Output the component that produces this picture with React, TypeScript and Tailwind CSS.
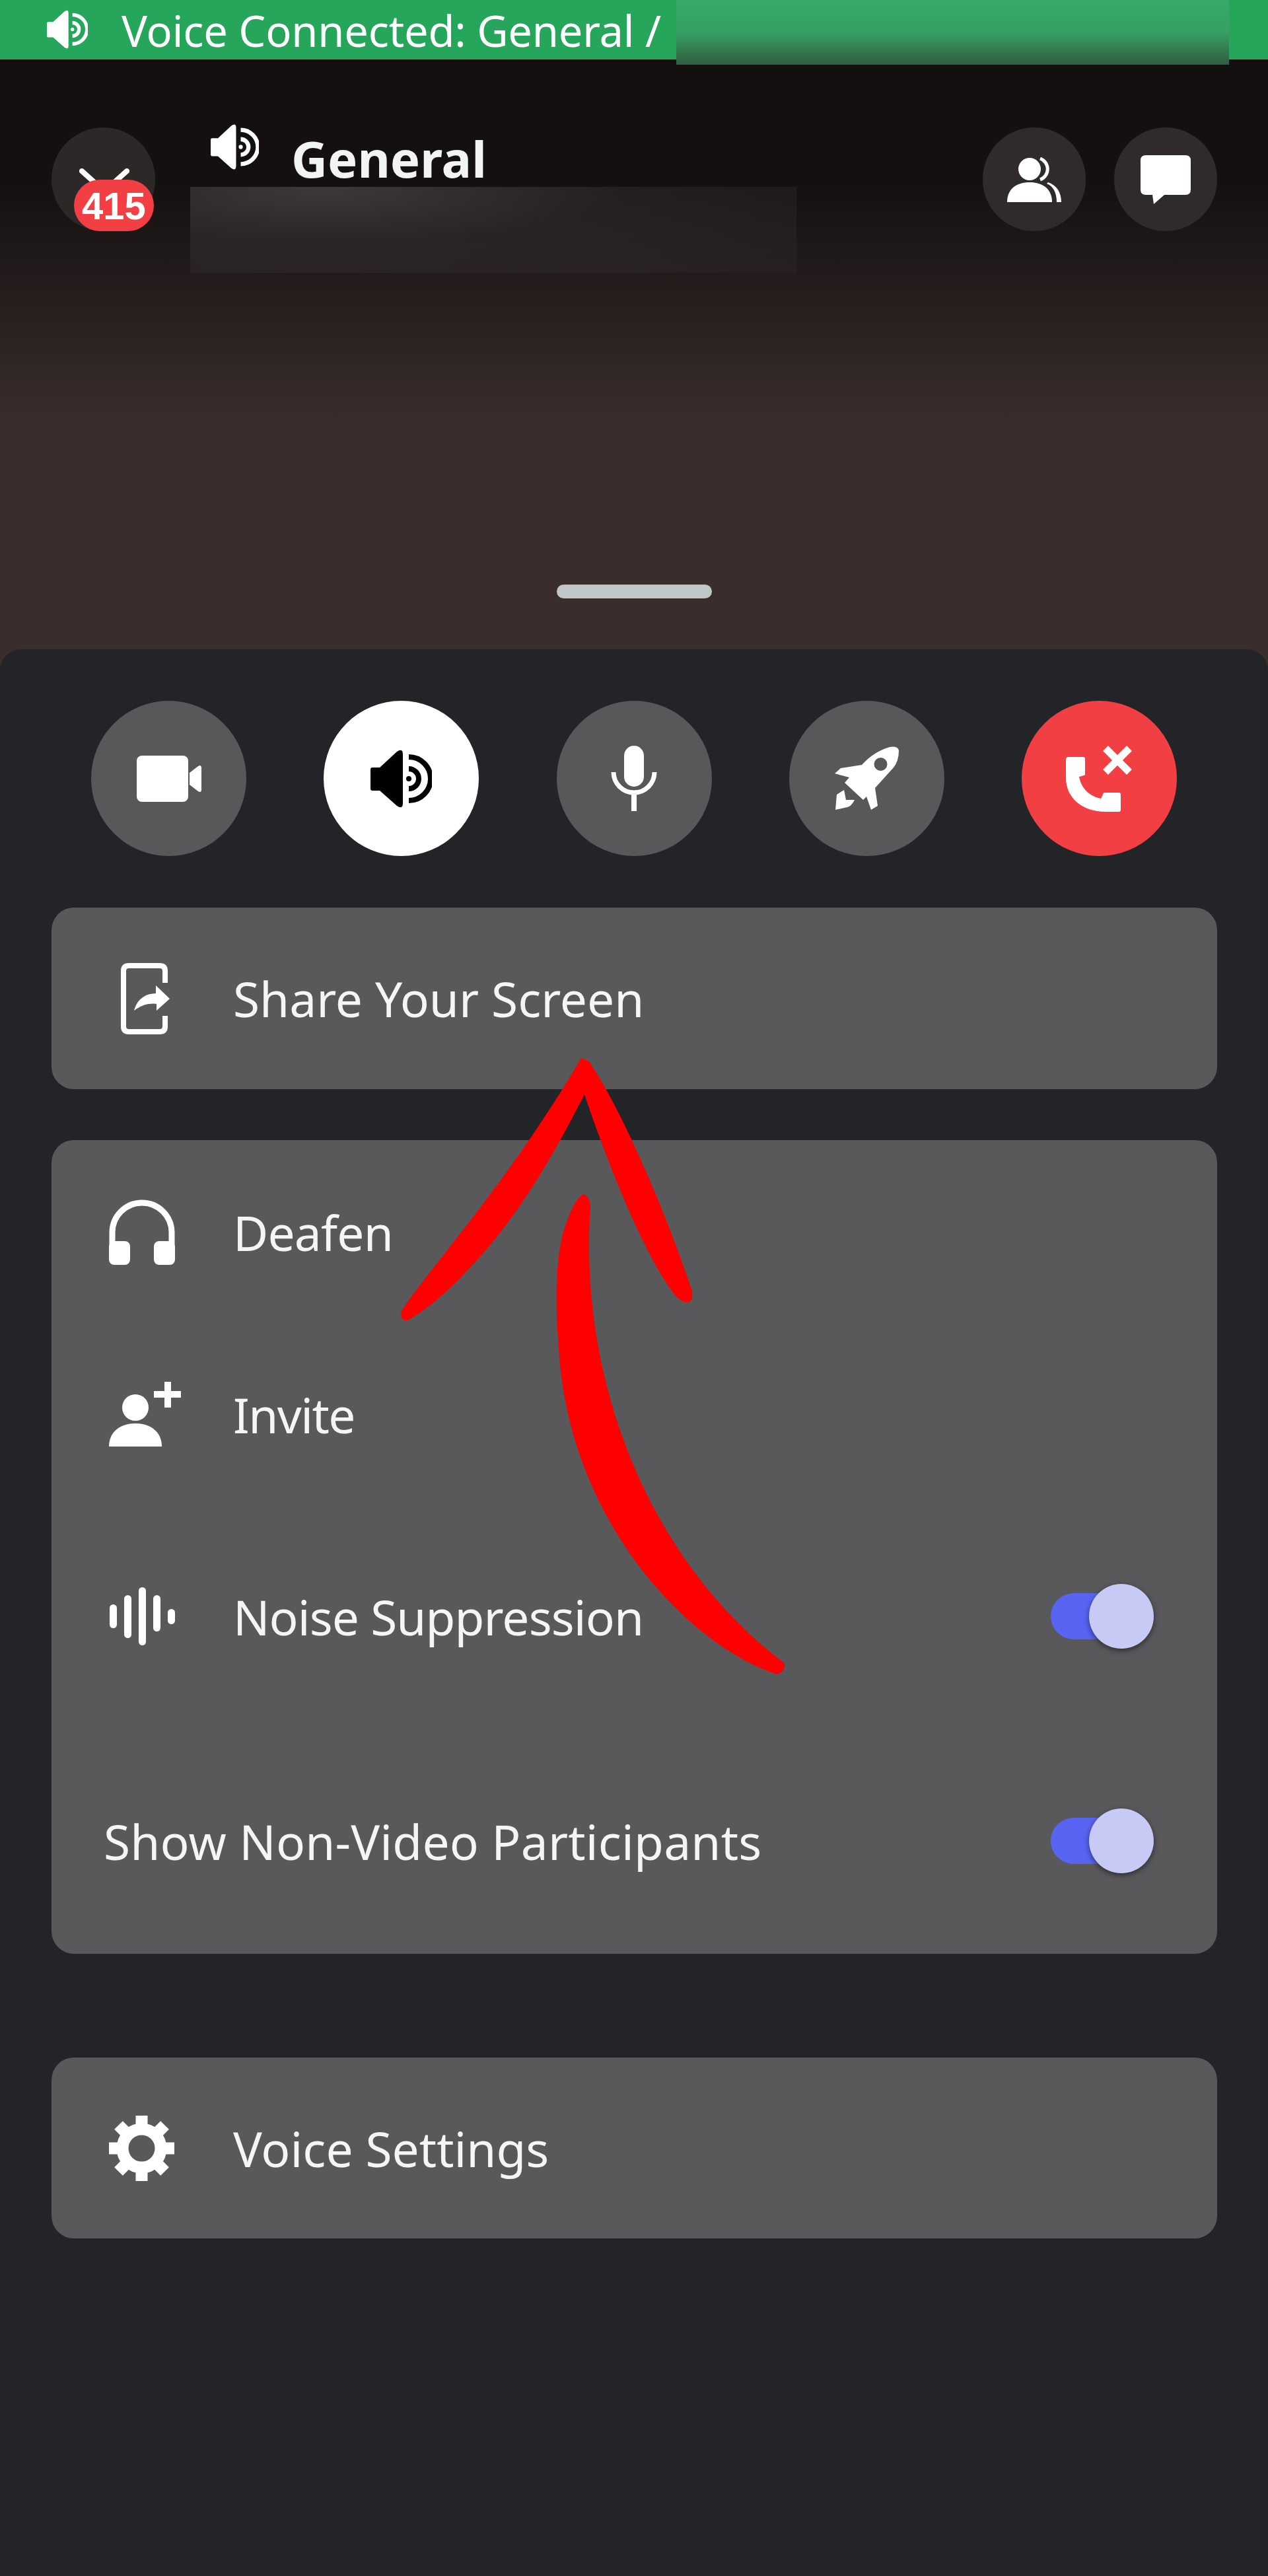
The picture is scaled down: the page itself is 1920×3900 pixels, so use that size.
const font = "[font-family:'Noto_Sans',sans-serif]";

function SpeakerIcon({ className }: { className: string }) {
  return (
    <svg className={className} viewBox="0 0 93 88" fill="currentColor">
      <path d="M0 30 Q0 27 3 27 H14 L40 3 Q49 -3 49 7 V81 Q49 91 40 85 L14 62 H3 Q0 62 0 59 Z" />
      <path d="M58 11 A33 33 0 0 1 58 77" fill="none" stroke="currentColor" strokeWidth="8" />
      <path d="M58 29 A15 15 0 0 1 58 59" fill="none" stroke="currentColor" strokeWidth="8" />
      <circle cx="58" cy="44" r="4" />
    </svg>
  );
}

function VideoIcon() {
  return (
    <svg className="w-[98px] h-[70px] text-white" viewBox="0 0 98 70" fill="currentColor">
      <rect width="78" height="70" rx="8" />
      <path d="M80 26 L93 16 Q98 13 98 19 V51 Q98 57 93 54 L80 44 Z" />
    </svg>
  );
}

function MicIcon() {
  return (
    <svg className="w-[70px] h-[99px] text-white" viewBox="0 0 70 99" fill="currentColor">
      <rect x="20" width="30" height="62" rx="15" />
      <path d="M4 40 A31 31 0 0 0 66 40" fill="none" stroke="currentColor" strokeWidth="7" />
      <rect x="31" y="70" width="8" height="29" />
    </svg>
  );
}

function RocketIcon() {
  return (
    <svg className="w-[98px] h-[97px] text-white" viewBox="0 0 98 97" fill="currentColor">
      <path d="M84 1 Q96 -1 98 6 Q98 22 90 32 L62 63 L66 90 L56 96 L49 76 L44 81 L16 55 L23 47 L1 41 L10 33 L42 28 Q60 8 84 1 Z" />
      <circle cx="70.5" cy="27" r="10" fill="#58585b" />
      <path d="M2 96 L4 73 L15 66 L18 81 L31 81 Q26 91 20 92 Z" />
    </svg>
  );
}

function HangUpIcon() {
  return (
    <svg className="w-[104px] h-[102px] text-white" viewBox="0 0 104 102" fill="currentColor">
      <path d="M1 22 Q1 18 5 18 H27 Q30 18 30 21 V44 Q30 46 28 46 L21 48 C24 66 38 78 54 81 L57 75 Q57 72 60 72 H81 Q84 72 84 75 V98 Q84 101 81 101 H61 C26 101 1 80 1 50 Z" />
      <path d="M61 5 L97 41 M97 5 L61 41" stroke="currentColor" strokeWidth="11" fill="none" />
    </svg>
  );
}

function ShareIcon() {
  return (
    <svg className="w-[74px] h-[108px] text-white" viewBox="0 0 74 108" fill="currentColor">
      <path d="M67 30 V12 Q67 4 59 4 H12 Q4 4 4 12 V96 Q4 104 12 104 H59 Q67 104 67 96 V80" fill="none" stroke="currentColor" strokeWidth="8" />
      <path d="M53 34 L74 54 L54 72 V62 C40 60 28 66 20 72 C24 56 36 46 53 46 Z" />
    </svg>
  );
}

function HeadphonesIcon() {
  return (
    <svg className="w-[100px] h-[99px] text-white" viewBox="0 0 100 99" fill="currentColor">
      <path d="M5 68 V50 A45 45 0 0 1 95 50 V68" fill="none" stroke="currentColor" strokeWidth="9" />
      <rect y="63" width="32" height="36" rx="8" />
      <rect x="68" y="63" width="32" height="36" rx="8" />
    </svg>
  );
}

function InviteIcon() {
  return (
    <svg className="w-[109px] h-[98px] text-white" viewBox="0 0 109 98" fill="currentColor">
      <ellipse cx="40" cy="39" rx="20" ry="20" />
      <path d="M0 98 C0 75 18 63 40 63 C62 63 80 75 80 98 Z" />
      <path d="M68 19 H109 M89 0 V39" fill="none" stroke="currentColor" strokeWidth="10" />
    </svg>
  );
}

function WaveIcon() {
  return (
    <svg className="w-[100px] h-[88px] text-white" viewBox="0 0 100 88" fill="currentColor">
      <rect x="1" y="26" width="11" height="36" rx="5.5" />
      <rect x="23" y="12" width="11" height="65" rx="5.5" />
      <rect x="45" width="11" height="88" rx="5.5" />
      <rect x="67" y="12" width="11" height="55" rx="5.5" />
      <rect x="89" y="33" width="11" height="23" rx="5.5" />
    </svg>
  );
}

function GearIcon() {
  const teeth = [0, 45, 90, 135, 180, 225, 270, 315];
  return (
    <svg className="w-[99px] h-[99px] text-white" viewBox="0 0 99 99" fill="currentColor">
      <circle cx="49.5" cy="49.5" r="29" fill="none" stroke="currentColor" strokeWidth="18" />
      {teeth.map((deg) => (
        <rect key={deg} x="40.5" y="0" width="18" height="20" transform={`rotate(${deg} 49.5 49.5)`} />
      ))}
    </svg>
  );
}

function PeopleIcon() {
  return (
    <svg className="w-[82px] h-[68px] text-white" viewBox="0 0 82 68" fill="currentColor">
      <circle cx="34" cy="18" r="17" />
      <path d="M0 68 C0 48 14 38 34 38 C54 38 68 48 68 68 Z" />
      <path d="M50 2 A17 17 0 0 1 50 34" fill="none" stroke="currentColor" strokeWidth="5" />
      <path d="M62 38 C74 42 82 52 82 68 H75 C75 54 70 44 60 40 Z" />
    </svg>
  );
}

function ChatIcon() {
  return (
    <svg className="w-[76px] h-[74px] text-white" viewBox="0 0 76 74" fill="currentColor">
      <path d="M8 0 H68 Q76 0 76 8 V52 Q76 60 68 60 H36 L20 74 L18 60 H8 Q0 60 0 52 V8 Q0 0 8 0 Z" />
    </svg>
  );
}

function Toggle() {
  return (
    <div className="relative w-[156px] h-[99px] flex items-center">
      <div className="w-[130px] h-[70px] rounded-full bg-[#5865f2]" />
      <div className="absolute right-0 top-0 w-[98px] h-[98px] rounded-full bg-[#c7caf5] shadow-[0_3px_8px_rgba(0,0,0,0.5)]" />
    </div>
  );
}

function RoundButton({ bg, children }: { bg: string; children: React.ReactNode }) {
  return <div className={`w-[235px] h-[235px] rounded-full flex items-center justify-center ${bg}`}>{children}</div>;
}

function Label({ tracking = '', children }: { tracking?: string; children: React.ReactNode }) {
  return <span className={`text-[73px] leading-none text-[#f5f5f6] whitespace-nowrap ${tracking}`}>{children}</span>;
}

export default function App() {
  return (
    <div className={`relative w-[1920px] h-[3900px] overflow-hidden bg-[#3a2e2c] ${font}`}>
      <div className="flex items-start h-[90px] bg-[#26a65b] pl-[71px] pr-[59px]">
        <div className="mt-[15px] text-white">
          <SpeakerIcon className="w-[62px] h-[59px]" />
        </div>
        <span className="ml-[51px] mt-[6px] w-[820px] whitespace-nowrap text-[65px] leading-[80px] tracking-[-0.2px] text-white">Voice Connected: General /</span>
        <div className="ml-auto w-[837px] h-[98px] bg-gradient-to-b from-[#38aa6a] via-[#35a064] to-[#2f5c41]" />
      </div>

      <div className="h-[893px] bg-gradient-to-b from-[#141010] from-[20%] to-[#3a2e2c] to-[62%] flex flex-col">
        <div className="flex items-start pt-[103px] pl-[78px] pr-[77px]">
          <div className="relative w-[157px] h-[157px] rounded-full bg-[#2c2828] shrink-0">
            <svg className="absolute left-[42px] top-[62px] w-[76px] h-[24px]" viewBox="0 0 76 24" fill="none" stroke="white" strokeWidth="8" strokeLinecap="round">
              <path d="M4 4 L24 22 M72 4 L52 22" />
            </svg>
            <div className="absolute left-[34px] top-[79px] w-[121px] h-[78px] rounded-full bg-[#f23f43] flex items-center justify-center text-[58px] font-bold text-white font-['Liberation_Sans']">415</div>
          </div>
          <div className="ml-[53px] flex flex-col">
            <div className="flex items-start pl-[31px] h-[90px]">
              <SpeakerIcon className="w-[73px] h-[69px] mt-[-5px] text-white" />
              <span className="ml-[49px] mt-[2px] text-[76px] leading-[90px] font-bold text-[#f2f3f5]">General</span>
            </div>
            <div className="w-[918px] h-[130px] bg-[radial-gradient(ellipse_at_22%_0%,rgba(255,255,255,0.17),rgba(255,255,255,0.06)_45%,rgba(255,255,255,0.02)_100%)]" />
          </div>
          <div className="ml-auto flex gap-[43px]">
            <div className="w-[156px] h-[157px] rounded-full bg-[#2f2b2a] flex items-center justify-center"><PeopleIcon /></div>
            <div className="w-[156px] h-[157px] rounded-full bg-[#2f2b2a] flex items-center justify-center"><ChatIcon /></div>
          </div>
        </div>
        <div className="mt-auto mb-[77px] mx-auto w-[235px] h-[21px] rounded-full bg-[#c1c6c9]" />
      </div>

      <div className="h-[2917px] rounded-t-[32px] bg-[#232428] pl-[78px] pr-[77px] pt-[78px] flex flex-col">
        <div className="flex justify-between ml-[60px] mr-[61px] mb-[78px]">
          <RoundButton bg="bg-[#58585b]"><VideoIcon /></RoundButton>
          <RoundButton bg="bg-white"><SpeakerIcon className="w-[93px] h-[88px] text-black" /></RoundButton>
          <RoundButton bg="bg-[#58585b]"><MicIcon /></RoundButton>
          <RoundButton bg="bg-[#58585b]"><RocketIcon /></RoundButton>
          <RoundButton bg="bg-[#f23f43]"><HangUpIcon /></RoundButton>
        </div>

        <div className="h-[275px] rounded-[34px] bg-[#59595b] flex items-center pl-[105px]">
          <ShareIcon />
          <div className="ml-[96px]"><Label>Share Your Screen</Label></div>
        </div>

        <div className="mt-[77px] h-[1232px] rounded-[34px] bg-[#59595b] flex flex-col">
          <div className="h-[278px] flex items-center pl-[87px]">
            <HeadphonesIcon />
            <div className="ml-[88px]"><Label tracking="tracking-[-0.8px]">Deafen</Label></div>
          </div>
          <div className="h-[274px] flex items-center pl-[87px]">
            <InviteIcon />
            <div className="ml-[79px]"><Label tracking="tracking-[-1.6px]">Invite</Label></div>
          </div>
          <div className="h-[338px] flex items-center pl-[87px] pr-[96px]">
            <WaveIcon />
            <div className="ml-[88px]"><Label tracking="tracking-[-0.9px]">Noise Suppression</Label></div>
            <div className="ml-auto"><Toggle /></div>
          </div>
          <div className="h-[342px] flex items-center pl-[79px] pr-[96px]">
            <Label tracking="tracking-[0.2px]">Show Non-Video Participants</Label>
            <div className="ml-auto"><Toggle /></div>
          </div>
        </div>

        <div className="mt-[157px] h-[274px] rounded-[34px] bg-[#59595b] flex items-center pl-[87px]">
          <GearIcon />
          <div className="ml-[89px]"><Label>Voice Settings</Label></div>
        </div>
      </div>

      {/* hand drawn arrow on top of the menu */}
      <svg className="absolute left-0 top-0 pointer-events-none" width="1920" height="3900" viewBox="0 0 1920 3900" fill="#ff0000">
        <path d="M880 1602 L891 1606 C930 1660 1000 1810 1048 1955 Q1050 1968 1043 1972 Q1030 1972 1020 1958 C980 1905 930 1790 885 1657 C850 1725 790 1840 706 1925 Q660 1975 617 1999 Q605 2000 608 1985 C650 1920 770 1790 880 1602 Z" />
        <path d="M883 1808 Q892 1810 894 1825 C875 2100 990 2370 1188 2518 Q1190 2530 1177 2535 C1040 2490 860 2300 846 2040 C838 1950 845 1880 858 1851 Q870 1815 883 1808 Z" />
      </svg>
    </div>
  );
}
